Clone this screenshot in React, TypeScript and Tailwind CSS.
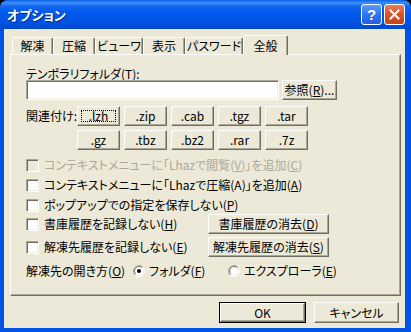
import React from "react";

const jp = "font-['Noto_Sans_CJK_JP','Liberation_Sans',sans-serif] [font-feature-settings:'palt']";

const raised =
  "bg-[#ECE9D8] border border-t-white border-l-white border-r-[#716F64] border-b-[#716F64] shadow-[inset_-1px_-1px_#ACA899]";
const sunken =
  "border border-t-[#ACA899] border-l-[#ACA899] border-r-white border-b-white shadow-[inset_1px_1px_#716F64,inset_-1px_-1px_#F1EFE2]";

function U({ c }: { c: string }) {
  return <span className="underline underline-offset-[1px]">{c}</span>;
}

function Btn({ children, className = "", focus = false }: { children: React.ReactNode; className?: string; focus?: boolean }) {
  return (
    <div className={`relative flex items-center justify-center text-[12px] leading-none text-black ${raised} ${className}`}>
      {children}
      {focus && <span className="absolute inset-[3px] border border-dotted border-black" />}
    </div>
  );
}

function Check({ disabled = false, children }: { disabled?: boolean; children: React.ReactNode }) {
  return (
    <div className="flex items-center h-[20px]">
      <div className={`w-[13px] h-[13px] shrink-0 ${sunken} ${disabled ? "bg-[#ECE9D8]" : "bg-white"}`} />
      <span className={`ml-[5px] text-[12px] leading-none whitespace-nowrap ${disabled ? "text-[#ACA899]" : "text-black"}`}>
        {children}
      </span>
    </div>
  );
}

function Radio({ checked = false }: { checked?: boolean }) {
  // classic sunken radio circle
  const a = 6 - 5.5 * 0.7071;
  const b = 6 + 5.5 * 0.7071;
  const c = 6 - 4.5 * 0.7071;
  const d = 6 + 4.5 * 0.7071;
  return (
    <svg width="12" height="12" viewBox="0 0 12 12" className="shrink-0">
      <circle cx="6" cy="6" r="5" fill="white" />
      <path d={`M${a} ${b} A5.5 5.5 0 0 1 ${b} ${a}`} stroke="#ACA899" fill="none" />
      <path d={`M${b} ${a} A5.5 5.5 0 0 1 ${a} ${b}`} stroke="#FFFFFF" fill="none" />
      <path d={`M${c} ${d} A4.5 4.5 0 0 1 ${d} ${c}`} stroke="#716F64" fill="none" />
      <path d={`M${d} ${c} A4.5 4.5 0 0 1 ${c} ${d}`} stroke="#F1EFE2" fill="none" />
      {checked && <circle cx="6" cy="6" r="2" fill="black" />}
    </svg>
  );
}

const tabs = [
  { label: "解凍", w: "w-[41px]" },
  { label: "圧縮", w: "w-[42px]" },
  { label: "ビューワ", w: "w-[48px]" },
  { label: "表示", w: "w-[42px]" },
  { label: "パスワード", w: "w-[58px]" },
];

const exts1 = [".lzh", ".zip", ".cab", ".tgz", ".tar"];
const exts2 = [".gz", ".tbz", ".bz2", ".rar", ".7z"];

export default function App() {
  return (
    <div className={`w-[411px] h-[332px] bg-black ${jp}`}>
      <div className="w-full h-full flex flex-col rounded-t-[8px] bg-[#0054E3] overflow-hidden">
        {/* Title bar */}
        <div className="h-[29px] shrink-0 flex items-center pl-[7px] pr-[6px] bg-[linear-gradient(180deg,#0B5FE8_0%,#3C8FF8_10%,#1466F0_22%,#0058EE_45%,#0054E3_75%,#0048CC_100%)]">
          <span className="text-white font-bold text-[13px] leading-none [text-shadow:1px_1px_#0A2A7A]">
            オプション
          </span>
          <div className="ml-auto flex items-center gap-[2px]">
            <div className="w-[21px] h-[21px] rounded-[3px] border border-white flex items-center justify-center bg-[linear-gradient(180deg,#5A9CFF_0%,#2E73F0_50%,#2260E0_100%)]">
              <span className="text-white font-bold text-[15px] leading-none font-['Liberation_Sans',sans-serif]">?</span>
            </div>
            <div className="w-[21px] h-[21px] rounded-[3px] border border-white flex items-center justify-center bg-[linear-gradient(180deg,#E9805E_0%,#D8542A_45%,#C7431C_100%)]">
              <svg width="11" height="11" viewBox="0 0 11 11">
                <path d="M1.5 1.5 L9.5 9.5 M9.5 1.5 L1.5 9.5" stroke="white" strokeWidth="2" strokeLinecap="square" />
              </svg>
            </div>
          </div>
        </div>

        {/* Body */}
        <div className="flex-1 ml-[4px] mr-[6px] mb-[4px] bg-[#ECE9D8] flex flex-col pl-[6px] pr-[4px] pt-[6px]">
          {/* Tabs */}
          <div className="flex items-end h-[19px] pl-[2px]">
            {tabs.map(t => (
              <div
                key={t.label}
                className={`${t.w} h-[17px] flex items-center justify-center text-[12px] leading-none text-black border-l border-t border-l-white border-t-white border-r border-r-[#716F64] shadow-[inset_-1px_0_#ACA899] rounded-tl-[2px] rounded-tr-[2px]`}
              >
                {t.label}
              </div>
            ))}
            <div className="w-[45px] h-[20px] -mb-[1px] relative z-10 bg-[#ECE9D8] flex items-start justify-center pt-[4px] text-[12px] leading-none text-black border-l border-t border-l-white border-t-white border-r border-r-[#716F64] shadow-[inset_-1px_0_#ACA899] rounded-tl-[2px] rounded-tr-[2px]">
              全般
            </div>
          </div>

          {/* Panel */}
          <div className="w-[391px] h-[242px] border border-t-white border-l-white border-r-[#716F64] border-b-[#716F64] shadow-[inset_-1px_-1px_#ACA899] flex flex-col pl-[15px] pt-[12px] text-[12px] text-black">
            <div className="h-[13px] leading-[13px]">
              テンポラリフォルダ(<U c="T" />):
            </div>
            <div className="flex items-center gap-[3px]">
              <div className={`w-[253px] h-[20px] bg-white ${sunken}`} />
              <Btn className="w-[55px] h-[20px]">
                参照(<U c="R" />)...
              </Btn>
            </div>

            <div className="flex items-center mt-[6px]">
              <span className="w-[51px] leading-none whitespace-nowrap">関連付け:</span>
              <div className="flex gap-[4px]">
                {exts1.map((e, i) => (
                  <Btn key={e} className="w-[43px] h-[20px]" focus={i === 0}>
                    {e}
                  </Btn>
                ))}
              </div>
            </div>
            <div className="flex gap-[4px] mt-[4px] ml-[51px]">
              {exts2.map(e => (
                <Btn key={e} className="w-[43px] h-[20px]">
                  {e}
                </Btn>
              ))}
            </div>

            <div className="flex flex-col mt-[5px]">
              <Check disabled>
                コンテキストメニューに「Lhazで閲覧(<U c="V" />)」を追加(<U c="C" />)
              </Check>
              <Check>
                コンテキストメニューに「Lhazで圧縮(A)」を追加(<U c="A" />)
              </Check>
              <Check>
                ポップアップでの指定を保存しない(<U c="P" />)
              </Check>
            </div>
            <div className="grid grid-cols-[182px_121px] gap-y-[3px] -mt-[1px]">
              <Check>
                書庫履歴を記録しない(<U c="H" />)
              </Check>
              <Btn className="h-[20px]">
                書庫履歴の消去(<U c="D" />)
              </Btn>
              <Check>
                解凍先履歴を記録しない(<U c="E" />)
              </Check>
              <Btn className="h-[20px]">
                解凍先履歴の消去(<U c="S" />)
              </Btn>
            </div>

            <div className="flex items-center h-[20px] mt-[4px] leading-none">
              <span className="w-[107px] whitespace-nowrap">
                解凍先の開き方(<U c="O" />)
              </span>
              <div className="w-[95px] flex items-center">
                <Radio checked />
                <span className="ml-[4px]">
                  フォルダ(<U c="F" />)
                </span>
              </div>
              <div className="flex items-center">
                <Radio />
                <span className="ml-[4px]">
                  エクスプローラ(<U c="E" />)
                </span>
              </div>
            </div>
          </div>

          {/* Bottom buttons */}
          <div className="flex justify-end gap-[8px] mt-[6px] pr-[2px]">
            <div className="w-[87px] h-[21px] border border-black">
              <Btn className="w-full h-full">OK</Btn>
            </div>
            <Btn className="w-[85px] h-[21px]">キャンセル</Btn>
          </div>
        </div>
      </div>
    </div>
  );
}
